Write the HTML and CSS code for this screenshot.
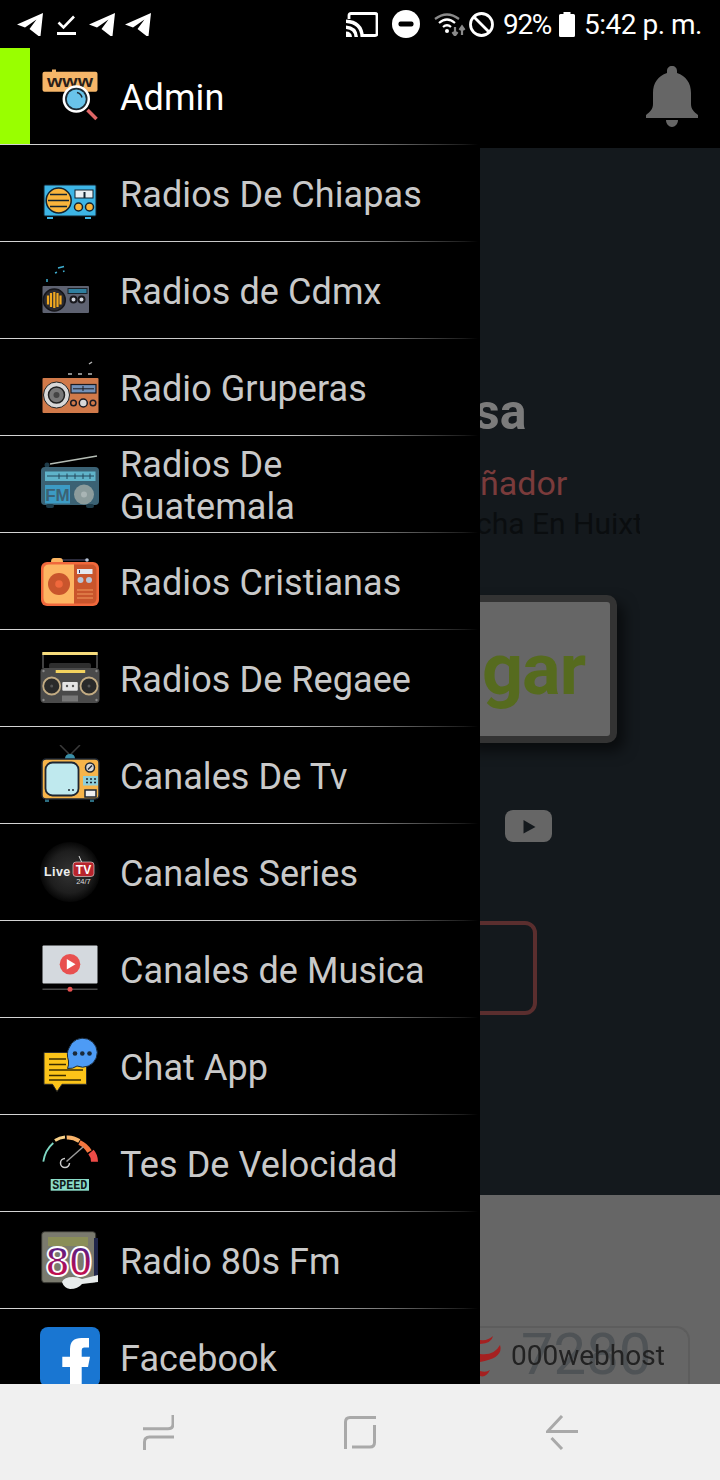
FILE: index.html
```html
<!DOCTYPE html>
<html lang="es">
<head>
<meta charset="utf-8">
<title>Radios</title>
<link rel="stylesheet" href="styles.css">
</head>
<body>
<div class="screen">
  <header class="status">
    <div class="status-left">
      <svg class="st-tg" viewBox="0 0 26 23"><path d="M0 11.500 26 0 23.500 23H21.500L12.500 16 19.500 6.500 8 14.500Z"/></svg>
      <svg class="st-check" viewBox="0 0 19 20"><path class="st-line" d="M1.500 7.500 6.500 12.500 17 1.500"/><rect y="17" width="19" height="3"/></svg>
      <svg class="st-tg st-tg2" viewBox="0 0 26 23"><path d="M0 11.500 26 0 23.500 23H21.500L12.500 16 19.500 6.500 8 14.500Z"/></svg>
      <svg class="st-tg st-tg3" viewBox="0 0 26 23"><path d="M0 11.500 26 0 23.500 23H21.500L12.500 16 19.500 6.500 8 14.500Z"/></svg>
    </div>
    <div class="status-right">
      <svg class="st-cast" viewBox="0 0 32 25"><path class="st-line2" d="M3 7V3.500Q3 1.500 5 1.500H29Q31 1.500 31 3.500V21.500Q31 23.500 29 23.500H17"/><path d="M0 7.500Q17 8 18 25H14.500Q14 12 0 11ZM0 13.500Q11 14 12 25H8.500Q8 17.500 0 17ZM0 19.500Q5.500 19.500 6 25H0Z"/></svg>
      <svg class="st-dnd" viewBox="0 0 28 28"><circle cx="14" cy="14" r="14"/><rect class="st-cut" x="6.500" y="11.500" width="15" height="5" rx="2"/></svg>
      <svg class="st-wifi" viewBox="0 0 32 24"><path class="st-wifi-a" d="M1 7Q13-2 25 7"/><path class="st-wifi-b" d="M5 11Q13 4 21 11M9 15Q13 11.500 17 15"/><circle class="st-wifi-c" cx="13" cy="19" r="2"/><path class="st-wifi-a2" d="M21 15V23M18.500 20 21 23.500 23.500 20"/><path class="st-wifi-b2" d="M28 23V15M25.500 18 28 14.500 30.500 18"/></svg>
      <svg class="st-block" viewBox="0 0 25 25"><circle class="st-line2" cx="12.500" cy="12.500" r="11"/><path class="st-line2" d="M5 5 20 20"/></svg>
      <span class="st-pct">92%</span>
      <svg class="st-batt" viewBox="0 0 16 25"><path d="M4.500 0H11.500V2H14.500Q16 2 16 3.500V23.500Q16 25 14.500 25H1.500Q0 25 0 23.500V3.500Q0 2 1.500 2H4.500Z"/></svg>
      <span class="st-time">5:42 p. m.</span>
    </div>
  </header>

  <div class="app">
    <nav class="drawer">
      <div class="row row-head">
        <span class="accent"></span>
        <svg class="ico" viewBox="0 0 60 60"><rect class="o-www" x="2.500" y="5.700" width="55" height="20" rx="2"/><rect class="o-www" x="12" y="3.500" width="4" height="3"/><text class="t-www" x="30" y="20.500" text-anchor="middle" textLength="46" lengthAdjust="spacingAndGlyphs">www</text><path class="o-handle" d="M47.500 44 56.500 53"/><circle class="o-lens-w" cx="36.300" cy="33" r="12.500"/><circle class="o-lens" cx="36.300" cy="33" r="9.500"/><path class="o-glint" d="M37 26.500Q41 27.500 42 31.500"/></svg>
        <span class="label label-admin">Admin</span>
      </div>

      <div class="row">
        <svg class="ico" viewBox="0 0 60 60"><rect class="a-body" x="4" y="22" width="52" height="31" rx="1"/><rect class="a-foot" x="7" y="54" width="6" height="2"/><rect class="a-foot" x="45" y="54" width="6" height="2"/><circle class="a-spk" cx="18.700" cy="37.500" r="12.500"/><path class="a-ln" d="M10 31.500H27M8 37.500H29M10 43.500H27"/><rect class="a-disp" x="35" y="27" width="18" height="8"/><path class="a-ln2" d="M44.500 29V35"/><circle class="a-knob" cx="38.500" cy="44" r="4"/><circle class="a-knob" cx="49.500" cy="44" r="4"/></svg>
        <span class="label">Radios De Chiapas</span>
      </div>

      <div class="row">
        <svg class="ico" viewBox="0 0 60 60"><path class="b-note" d="M18 8 24 6.500M15 13 17 12.300M23 11.500 24.500 11M7 22V19"/><rect class="b-body" x="2.500" y="26" width="46.500" height="27" rx="1"/><circle class="b-spk" cx="14.300" cy="40" r="11"/><path class="b-st" d="M8 35.500V44.500M11 33V47M14.300 32V48M17.500 33V47M20.500 35.500V44.500"/><rect class="b-disp" x="28" y="28.500" width="19" height="5"/><circle class="b-knob" cx="33.500" cy="39.500" r="3"/><circle class="b-knob" cx="41.500" cy="39.500" r="3"/></svg>
        <span class="label">Radios de Cdmx</span>
      </div>

      <div class="row">
        <svg class="ico" viewBox="0 0 60 60"><path class="c-dash" d="M28 17H32M38 17H42M48 17H52M49 7 52 5"/><rect class="c-body" x="2.500" y="21" width="56" height="35" rx="1"/><circle class="c-r1" cx="16.500" cy="38" r="13"/><circle class="c-r2" cx="16.500" cy="38" r="8"/><circle class="c-r3" cx="16.500" cy="38" r="3"/><rect class="c-disp" x="31" y="27.500" width="25" height="8.500"/><path class="c-dl" d="M33 31.800H54M43 29V34"/><circle class="c-k" cx="33.500" cy="46" r="2.800"/><circle class="c-k2" cx="43.300" cy="46" r="4"/><circle class="c-k" cx="53" cy="46" r="2.800"/></svg>
        <span class="label">Radio Gruperas</span>
      </div>

      <div class="row">
        <svg class="ico" viewBox="0 0 60 60"><path class="d-ant" d="M10 10 57 2"/><circle class="d-dark" cx="7" cy="11" r="2.500"/><rect class="d-body" x="1" y="13" width="58" height="38" rx="4"/><rect class="d-dark" x="6" y="50" width="8" height="4" rx="2"/><rect class="d-dark" x="46" y="50" width="8" height="4" rx="2"/><rect class="d-band" x="5" y="17.500" width="50.500" height="9.500"/><path class="d-tick" d="M7 22H54M19 19.500V25M27 19.500V25M35 19.500V25M43 19.500V25M50 19.500V25"/><rect class="d-fm" x="5" y="31" width="25" height="18.500"/><text class="t-fm" x="17.500" y="46.500" text-anchor="middle">FM</text><circle class="d-disc" cx="44" cy="40.500" r="10"/><circle class="d-hub" cx="44" cy="40.500" r="3"/></svg>
        <span class="label">Radios De<br>Guatemala</span>
      </div>

      <div class="row">
        <svg class="ico" viewBox="0 0 60 60"><path class="e-ant" d="M22 9H46"/><circle class="e-dot" cx="47" cy="9" r="1.800"/><path class="e-hd" d="M11 11Q11 7 14 7H20Q23 7 23 11Z"/><rect class="e-body" x="1" y="11" width="58" height="44" rx="6"/><path class="e-left" d="M9 13.500H34V52.500H9Q3.500 52.500 3.500 47V19Q3.500 13.500 9 13.500Z"/><path class="e-right" d="M34 13.500H51Q56.500 13.500 56.500 19V47Q56.500 52.500 51 52.500H34Z"/><circle class="e-sp1" cx="19" cy="33" r="11"/><circle class="e-sp2" cx="19" cy="33" r="3.800"/><rect class="e-disp" x="37" y="18" width="15.500" height="5"/><rect class="e-mk" x="39" y="19" width="1" height="3"/><circle class="e-k" cx="40.500" cy="29" r="3"/><circle class="e-k" cx="49" cy="29" r="3"/><path class="e-ln" d="M37 39H53M37 43H53M37 47H53"/></svg>
        <span class="label">Radios Cristianas</span>
      </div>

      <div class="row">
        <svg class="ico" viewBox="0 0 60 60"><path class="m-hnd" d="M3 20V6H57V20"/><path class="m-bar" d="M2.300 5.500H57.700"/><rect class="m-top" x="9" y="15" width="42" height="6" rx="2"/><rect class="m-body" x="0.500" y="20" width="59" height="35" rx="4"/><rect class="m-strip" x="15.700" y="22" width="29.500" height="3"/><circle class="m-sp" cx="11.700" cy="38" r="8.500"/><circle class="m-sp" cx="49" cy="38" r="8.500"/><circle class="m-c" cx="11.700" cy="38" r="1.500"/><circle class="m-c" cx="49" cy="38" r="1.500"/><rect class="m-cas" x="22.300" y="34" width="15.500" height="8.700" rx="1"/><circle class="m-c" cx="27" cy="38" r="1.200"/><circle class="m-c" cx="33" cy="38" r="1.200"/><rect class="m-low" x="22" y="47.500" width="16" height="6"/><circle class="m-scr" cx="3.500" cy="23" r="1.200"/><circle class="m-scr" cx="56.500" cy="23" r="1.200"/><circle class="m-scr" cx="3.500" cy="52" r="1.200"/><circle class="m-scr" cx="56.500" cy="52" r="1.200"/></svg>
        <span class="label">Radios De Regaee</span>
      </div>

      <div class="row">
        <svg class="ico" viewBox="0 0 60 60"><path class="f-ant" d="M20 0 30 10 40 0"/><path class="f-cap" d="M25 14Q25 9 30 9T35 14Z"/><rect class="f-foot" x="5" y="54" width="4" height="3"/><rect class="f-foot" x="50" y="54" width="4" height="3"/><rect class="f-body" x="2" y="14" width="57" height="40" rx="4"/><rect class="f-scr" x="5.500" y="17.500" width="33" height="33" rx="7"/><circle class="f-dots" cx="29" cy="45" r="1"/><circle class="f-dots" cx="33" cy="45" r="1"/><circle class="f-knob" cx="50" cy="22.500" r="4.500"/><path class="f-kl" d="M48 24.500 52 20.500"/><rect class="f-pad" x="43" y="31" width="15" height="9.500"/><path class="f-pd" d="M46 34H48M50 34H52M54 34H56M46 37.500H48M50 37.500H52M54 37.500H56"/><rect class="f-slot" x="45" y="45" width="11" height="7"/></svg>
        <span class="label">Canales De Tv</span>
      </div>

      <div class="row">
        <svg class="ico" viewBox="0 0 60 60"><defs><radialGradient id="livebg"><stop offset="0" stop-color="#333"/><stop offset=".7" stop-color="#1e1e1e"/><stop offset="1" stop-color="#060606"/></radialGradient></defs><circle cx="30" cy="30" r="30" fill="url(#livebg)"/><text class="t-live" x="4" y="34">Live</text><path class="g-ant" d="M39 14 42 21"/><rect class="g-tv" x="33" y="20" width="21" height="14.500" rx="3"/><text class="t-tv" x="43.500" y="32" text-anchor="middle">TV</text><text class="t-247" x="43.500" y="42" text-anchor="middle">24/7</text></svg>
        <span class="label">Canales Series</span>
      </div>

      <div class="row">
        <svg class="ico" viewBox="0 0 60 60"><rect class="h-scr" x="2.500" y="6.500" width="55" height="38" rx="1"/><circle class="h-red" cx="30" cy="25.300" r="10.300"/><path class="h-play" d="M26.800 20 35.500 25.300 26.800 30.600Z"/><path class="h-line" d="M2.500 50.300H57.500"/><circle class="h-red" cx="30" cy="50.300" r="2.500"/></svg>
        <span class="label">Canales de Musica</span>
      </div>

      <div class="row">
        <svg class="ico" viewBox="0 0 60 60"><path class="i-yel" d="M4 16.500H46.500V48.300H22L17 55.500 12.500 48.300H4Z"/><path class="i-ln" d="M9 23H26M9 28.500H26M9 34H43M9 39.500H26M9 44H41"/><path class="i-blue" d="M27.500 32.500Q29 29 28.500 25 26 17 29 12A14.500 14.500 0 1 1 37 30Q33 33 27.500 32.500Z"/><circle class="i-dot" cx="35" cy="17.500" r="2.300"/><circle class="i-dot" cx="42.300" cy="17.500" r="2.300"/><circle class="i-dot" cx="49.500" cy="17.500" r="2.300"/></svg>
        <span class="label">Chat App</span>
      </div>

      <div class="row">
        <svg class="ico" viewBox="0 0 60 60"><path class="j-a1" d="M3.300 28.700Q5 17 13.300 10"/><path class="j-a2" d="M15 7.500Q19.500 4.500 25 4"/><path class="j-a3" d="M26.700 4.500Q33 4 39.300 8"/><path class="j-a4" d="M39.500 9.500Q46 12.500 49.500 18.500"/><path class="j-a5" d="M51 19Q54.500 23 54.500 28.700"/><path class="j-ndl" d="M26.500 28.500 43.300 13.700"/><path class="j-hook" d="M25 25.500A4.500 4.500 0 1 0 29.500 30"/><rect class="j-box" x="10.700" y="46" width="38.300" height="11.700"/><text class="t-speed" x="29.800" y="55.800" text-anchor="middle" textLength="35" lengthAdjust="spacingAndGlyphs">SPEED</text></svg>
        <span class="label">Tes De Velocidad</span>
      </div>

      <div class="row">
        <svg class="ico" viewBox="0 0 60 60"><defs><linearGradient id="eighty" x1="0" y1="0" x2="0" y2="1"><stop offset="0" stop-color="#2a2a9c"/><stop offset=".55" stop-color="#a01060"/><stop offset="1" stop-color="#e0103c"/></linearGradient></defs><rect class="k-box" x="1.700" y="1.700" width="54" height="51" rx="3"/><rect class="k-in" x="8" y="7" width="40" height="9"/><rect class="k-side" x="54" y="8" width="4" height="44"/><text class="t-80" x="29" y="46" text-anchor="middle" fill="url(#eighty)">80</text><path class="k-bud" d="M22 52Q24 47 33 47 38 47 42 49L58 45V52L42 54Q38 59 30 59 24 58 22 52Z"/></svg>
        <span class="label">Radio 80s Fm</span>
      </div>

      <div class="row">
        <svg class="ico" viewBox="0 0 60 60"><rect class="l-fb" width="60" height="60" rx="8"/><path class="l-f" d="M30 60V40H22.300V29.700H30V22Q30 11 41.500 11H49V20.500H44Q41.700 20.500 41.700 23V29.700H50L48 40H41.700V60Z"/></svg>
        <span class="label">Facebook</span>
      </div>
    </nav>

    <section class="backdrop">
      <div class="bg-top">
        <svg class="bell" viewBox="0 0 52 61"><path d="M26 0C29 0 31 2 31 5V7C40 10 45 17 45 27V38C45 43 48 46 52 49V52H0V49C4 46 7 43 7 38V27C7 17 12 10 21 7V5C21 2 23 0 26 0ZM20 54H32C32 58 29 61 26 61S20 58 20 54Z"/></svg>
      </div>
      <div class="bg-main">
        <div class="t-sa">sa</div>
        <div class="t-nador">ñador</div>
        <div class="t-cha">cha En Huixt</div>
        <div class="btn"><span>gar</span></div>
        <svg class="yt" viewBox="0 0 47 32"><rect class="yt-bg" width="47" height="32" rx="8"/><path class="yt-pl" d="M18.500 10 30.500 17 18.500 23.500Z"/></svg>
        <div class="outline"></div>
        <footer class="bg-foot">
          <div class="badge">
            <svg class="swirl" viewBox="0 0 22 58"><path d="M0 12Q8 13 13 8 12 15 0 16ZM0 26Q14 28 20 17 24 30 0 34ZM0 43Q6 45 10 42 6 50 0 48Z"/></svg>
            <span class="num">7280</span>
            <span class="wh">000webhost</span>
          </div>
        </footer>
      </div>
    </section>
  </div>

  <footer class="navbar">
    <svg class="nv nv-rec" viewBox="0 0 31 35"><path d="M0 13.700H25Q30 13.700 30 9V0M31 22H6.500Q1.500 22 1.500 27V35"/></svg>
    <svg class="nv nv-home" viewBox="0 0 32 33"><path d="M1.500 33V6Q1.500 1.500 6 1.500H32M8 31H26Q30.500 31 30.500 26.500V9"/></svg>
    <svg class="nv nv-back" viewBox="0 0 32 35"><path d="M16 1 1.500 16.500H32M5.500 23 16 34"/></svg>
  </footer>
</div>
</body>
</html>
```
FILE: styles.css
```css
* { box-sizing: border-box; }
html, body { margin: 0; padding: 0; background: #000; }
.screen {
  width: 720px; height: 1480px; overflow: hidden;
  display: flex; flex-direction: column;
  font-family: Roboto, "Noto Sans", sans-serif;
}

/* status bar */
.status { height: 48px; background: #000; display: flex; justify-content: space-between; color: #fff; fill: #fff; }
.status-left { display: flex; align-items: flex-start; padding: 13px 0 0 17px; }
.st-tg { width: 26px; height: 23px; }
.st-check { width: 19px; height: 20px; margin: 2px 0 0 14px; }
.st-tg2 { margin-left: 13px; }
.st-tg3 { margin-left: 10px; }
.st-line { fill: none; stroke: #fff; stroke-width: 2.600; }
.st-line2 { fill: none; stroke: #fff; stroke-width: 2.800; }
.status-right { display: flex; align-items: center; padding-right: 18px; height: 48px; }
.st-cast { width: 32px; height: 25px; }
.st-dnd { width: 28px; height: 28px; margin-left: 14px; }
.st-cut { fill: #000; }
.st-wifi { width: 32px; height: 24px; margin-left: 14px; }
.st-wifi-a, .st-wifi-a2, .st-wifi-b2 { fill: none; stroke: #8a8a8a; stroke-width: 2.200; }
.st-wifi-b { fill: none; stroke: #fff; stroke-width: 2.200; }
.st-wifi-c { fill: #fff; }
.st-block { width: 25px; height: 25px; margin-left: 3px; }
.st-pct, .st-time { font-size: 28px; line-height: 48px; padding-top: 2px; }
.st-pct { margin-left: 9px; letter-spacing: -1.300px; }
.st-batt { width: 16px; height: 25px; margin-left: 8px; }
.st-time { margin-left: 9px; letter-spacing: -.5px; }

/* app */
.app { height: 1336px; display: flex; overflow: hidden; }
.drawer { width: 480px; flex: none; background: #000; position: relative; z-index: 1; }
.row {
  height: 97px; display: flex; align-items: center; padding-left: 40px; gap: 20px;
  position: relative;
}
.row::after {
  content: ""; position: absolute; left: 0; bottom: 0; width: 478px; height: 1px;
  background: linear-gradient(90deg, #d4d4d4 0, #c4c4c4 60%, #777 80%, #1c1c1c 97%, #000 100%);
}
.row-head { padding-left: 0; gap: 0; }
.accent { width: 30px; height: 96px; background: #9f0; margin: 0 10px 1px 0; align-self: flex-start; }
.ico { width: 60px; height: 60px; flex: none; margin-bottom: 1px; }
.row-head .ico { margin-right: 20px; }
.label { font-size: 36px; line-height: 42px; color: #c9c9c9; width: 340px; letter-spacing: .08px; padding-top: 2px; flex: none; }
.label-admin { color: #fff; }

/* backdrop */
.backdrop { flex: 1; display: flex; flex-direction: column; min-width: 0; }
.bg-top { height: 100px; background: #000; display: flex; justify-content: flex-end; padding: 18px 22px 0 0; flex: none; }
.bell { width: 52px; height: 61px; fill: #666; }
.bg-main { flex: 1; background: #14191d; padding-top: 236px; display: flex; flex-direction: column; align-items: flex-start; }
.t-sa { font-size: 50px; line-height: 56px; font-weight: 700; color: #7b7b7b; margin-left: -6px; }
.t-nador { font-size: 34px; line-height: 40px; color: #7a3b3b; margin-top: 23px; }
.t-cha { font-size: 30px; line-height: 36px; color: #0a0d0f; margin: 3px 0 0 -4px; width: 164px; overflow: hidden; white-space: nowrap; }
.btn {
  width: 157px; height: 148px; margin: 53px 0 0 -20px; flex: none;
  background: #666; border: 7px solid #333; border-radius: 10px;
  box-shadow: 7px 8px 14px rgba(0,0,0,.55);
  display: flex; align-items: center; justify-content: flex-end; padding: 0 25px 0 0;
  font-size: 72px; font-weight: 700; color: #566b1e; letter-spacing: -1px;
}
.yt { width: 47px; height: 32px; margin: 67px 0 0 25px; flex: none; }
.yt-bg { fill: #666; }
.yt-pl { fill: #14191d; }
.outline { width: 77px; height: 94px; margin: 79px 0 0 -20px; flex: none; border: 4px solid #5a2e2e; border-radius: 12px; }
.bg-foot { margin-top: auto; width: 100%; height: 189px; background: #666; display: flex; align-items: flex-end; flex: none; }
.badge {
  width: 230px; height: 58px; margin-left: -20px; position: relative;
  border: 2px solid #5d5d5d; border-bottom: 0; border-radius: 0 14px 0 0;
  display: flex; align-items: center; padding-left: 49px;
}
.swirl { position: absolute; left: 18px; top: 0; width: 22px; height: 58px; fill: #a52020; }
.wh { font-size: 28px; color: #222; line-height: 56px; filter: blur(.6px); position: relative; }
.num { position: absolute; left: 59px; top: -8px; font-size: 58px; line-height: 68px; color: #4f5356; }

/* nav bar */
.navbar { height: 96px; background: #f0f0f0; display: flex; align-items: center; gap: 170px; padding: 0 0 0 143px; flex: none; }
.nv { fill: none; stroke: #a9a9a9; stroke-width: 3; }
.nv-rec { width: 31px; height: 35px; }
.nv-home { width: 32px; height: 33px; }
.nv-back { width: 32px; height: 35px; }

/* admin icon */
.o-www { fill: #f6b669; }
.t-www { font: 700 17px "Liberation Sans", sans-serif; fill: #2a2018; }
.o-handle { stroke: #e06666; stroke-width: 3.500; }
.o-lens-w { fill: #1d2a33; stroke: #fff; stroke-width: 2.500; }
.o-lens { fill: #69c3ea; }
.o-glint { fill: none; stroke: #1d2a33; stroke-width: 1.500; }

/* radio 1 */
.a-body { fill: #3db5e6; stroke: #12222f; stroke-width: 1; }
.a-foot { fill: #3db5e6; }
.a-spk { fill: #f9b43c; stroke: #12222f; stroke-width: 1.500; }
.a-ln { stroke: #12222f; stroke-width: 1.500; }
.a-disp { fill: #e8eef2; stroke: #12222f; stroke-width: 1; }
.a-ln2 { stroke: #12222f; stroke-width: 2; }
.a-knob { fill: #f9b43c; stroke: #12222f; stroke-width: 1.500; }

/* radio 2 */
.b-note { fill: none; stroke: #3eaed0; stroke-width: 1.500; }
.b-body { fill: #5e6271; }
.b-spk { fill: #2a2a30; stroke: #16161a; stroke-width: 1.500; }
.b-st { fill: none; stroke: #f0a820; stroke-width: 2.200; }
.b-disp { fill: #2f7f9f; stroke: #18222a; stroke-width: 1; }
.b-knob { fill: #cfd3dc; stroke: #18181c; stroke-width: 2; }

/* radio 3 */
.c-dash { fill: none; stroke: #b5b5b5; stroke-width: 1.500; }
.c-body { fill: #d17a4a; }
.c-r1 { fill: #d8d8d8; stroke: #222; stroke-width: 1; }
.c-r2 { fill: #777; stroke: #222; stroke-width: 1.500; }
.c-r3 { fill: #444; }
.c-disp { fill: #7391b8; stroke: #1b1b22; stroke-width: 1.200; }
.c-dl { fill: none; stroke: #1b1b22; stroke-width: 1; }
.c-k { fill: #d17a4a; stroke: #1b1b22; stroke-width: 1.500; }
.c-k2 { fill: #d8d8d8; stroke: #1b1b22; stroke-width: 1.500; }

/* radio 4 */
.d-ant { stroke: #b5bdb5; stroke-width: 1.500; }
.d-dark { fill: #1e3c4a; }
.d-body { fill: #3b6274; }
.d-band { fill: #5fb3c9; }
.d-tick { fill: none; stroke: #24475a; stroke-width: 1; }
.d-fm { fill: #3c9bc4; }
.t-fm { font: 700 17px "Liberation Sans", sans-serif; fill: #3b6274; }
.d-disc { fill: #8c9c9c; }
.d-hub { fill: #a9b5b5; }

/* radio 5 */
.e-ant { stroke: #3a3a50; stroke-width: 1.500; }
.e-dot { fill: #b8c4d8; }
.e-hd { fill: #fcb460; }
.e-body { fill: #f0683c; }
.e-left { fill: #fdb562; }
.e-right { fill: #c9552c; }
.e-sp1 { fill: #c9552c; }
.e-sp2 { fill: #f0683c; }
.e-disp { fill: #e4e8f0; }
.e-mk { fill: #3a3a70; }
.e-k { fill: #b8c4d8; }
.e-ln { stroke: #f29a5c; stroke-width: 1.200; }

/* boombox */
.m-hnd { fill: none; stroke: #555; stroke-width: 1.500; }
.m-bar { stroke: #f6dc7c; stroke-width: 2.800; }
.m-top { fill: #2e2e2e; }
.m-body { fill: #4a4a4a; }
.m-strip { fill: #f2d25e; }
.m-sp { fill: #2a2a2a; stroke: #c3ac83; stroke-width: 1.800; }
.m-c { fill: #555; }
.m-cas { fill: #e4e4e4; }
.m-low { fill: #777; }
.m-scr { fill: #888; }

/* tv */
.f-ant { fill: none; stroke: #3a3a3a; stroke-width: 1.500; }
.f-cap { fill: #3b8fa8; }
.f-foot { fill: #2c6d80; }
.f-body { fill: #f6b44a; stroke: #1e2632; stroke-width: 1.500; }
.f-scr { fill: #bfe9ee; stroke: #1e2632; stroke-width: 1.800; }
.f-dots { fill: #1e2632; }
.f-knob { fill: #d8d8d8; stroke: #1e2632; stroke-width: 1.500; }
.f-kl { stroke: #1e2632; stroke-width: 1.500; }
.f-pad { fill: #8fd0dc; }
.f-pd { stroke: #1e2632; stroke-width: 1.500; }
.f-slot { fill: #eee; stroke: #1e2632; stroke-width: 1.500; }

/* live tv */
.t-live { font: 700 12.500px "Liberation Sans", sans-serif; fill: #eee; letter-spacing: .4px; }
.g-ant { stroke: #ddd; stroke-width: 1; }
.g-tv { fill: #b8242c; stroke: #e4e4e4; stroke-width: .6; }
.t-tv { font: 700 12px "Liberation Sans", sans-serif; fill: #fff; }
.t-247 { font: 400 7.500px "Liberation Sans", sans-serif; fill: #ddd; }

/* music */
.h-scr { fill: #d4d9de; }
.h-red { fill: #e8504f; }
.h-play { fill: #fff; }
.h-line { stroke: #4a4a4a; stroke-width: 1.500; }

/* chat */
.i-yel { fill: #fcc419; stroke: #2a2a2a; stroke-width: 1; }
.i-ln { stroke: #3a2c00; stroke-width: 1.600; }
.i-blue { fill: #4d9bf5; stroke: #1a2a3a; stroke-width: 1; }
.i-dot { fill: #1a2a3a; }

/* speed */
.j-a1 { fill: none; stroke: #7fd8c4; stroke-width: 1.800; }
.j-a2 { fill: none; stroke: #f9d28a; stroke-width: 3; }
.j-a3 { fill: none; stroke: #f9b36a; stroke-width: 4; }
.j-a4 { fill: none; stroke: #f4763e; stroke-width: 5; }
.j-a5 { fill: none; stroke: #ee4b47; stroke-width: 7; }
.j-ndl { stroke: #9a9a9a; stroke-width: 1.500; }
.j-hook { fill: none; stroke: #ccc; stroke-width: 1.500; }
.j-box { fill: #8adcc8; }
.t-speed { font: 700 12px "Liberation Mono", monospace; fill: #101818; }

/* 80 */
.k-box { fill: #7a7a6e; stroke: #33332e; stroke-width: 1; }
.k-in { fill: #8a8e58; }
.k-side { fill: #20264a; }
.t-80 { font: 700 42px "Liberation Sans", sans-serif; stroke: #fff; stroke-width: 1.800; }
.k-bud { fill: #e8ecec; }

/* facebook */
.l-fb { fill: #1976d2; }
.l-f { fill: #fff; }
```
